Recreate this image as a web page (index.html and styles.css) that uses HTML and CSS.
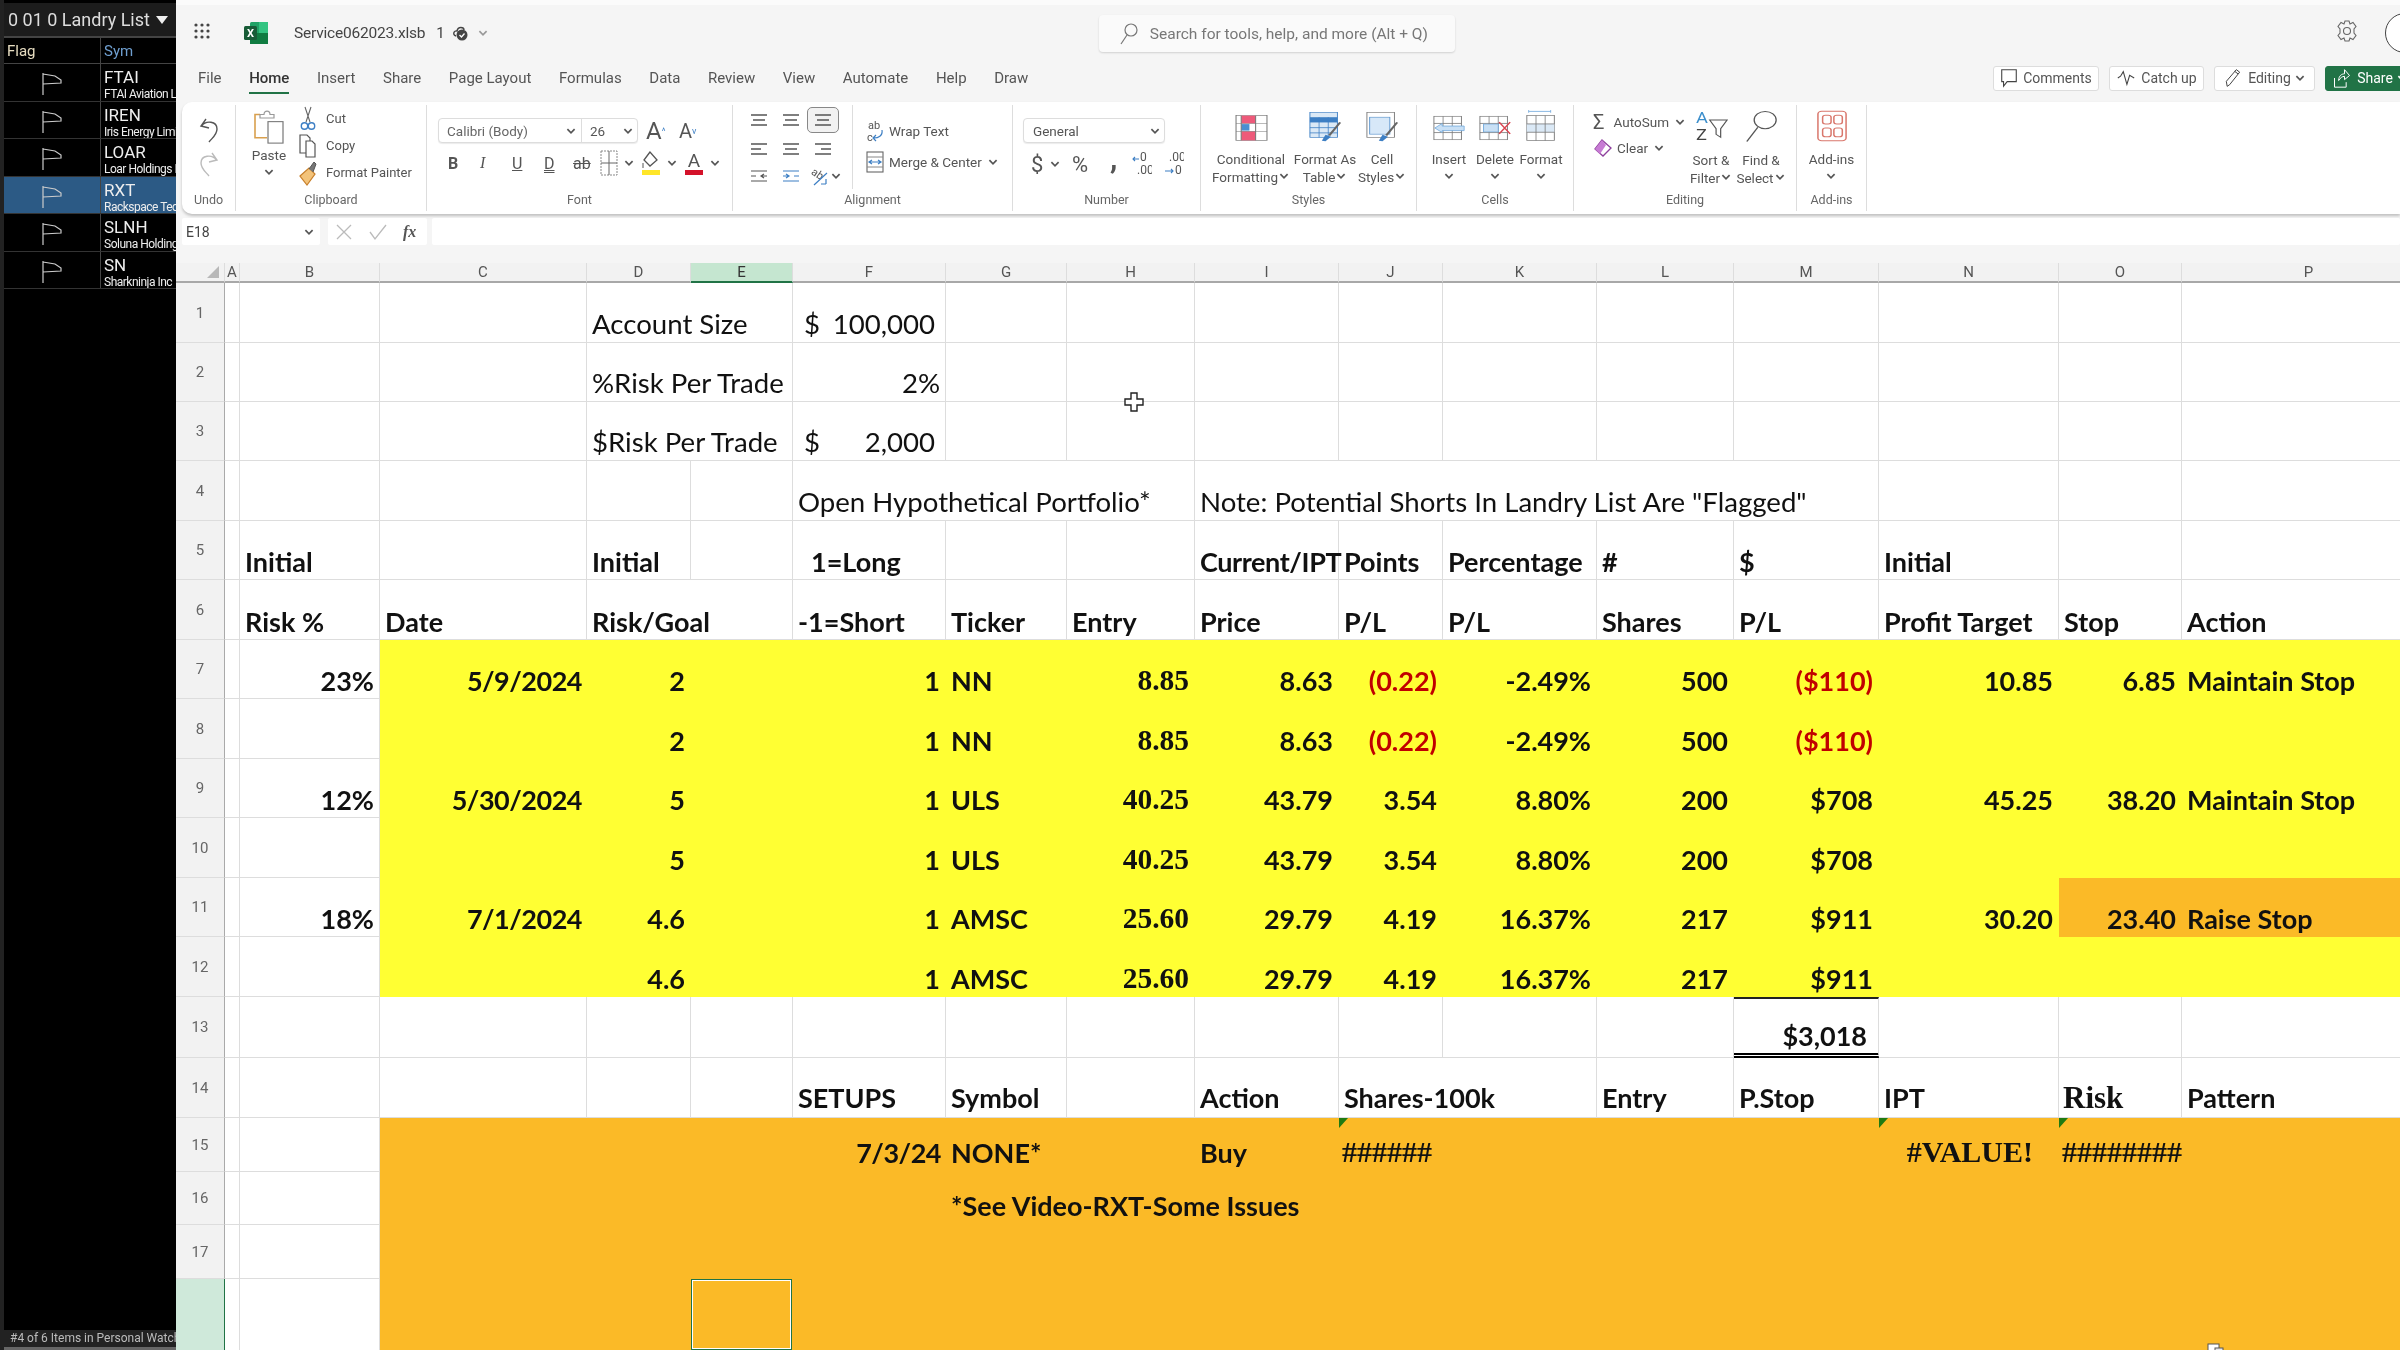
FILE: index.html
```html
<!DOCTYPE html>
<html lang="en">
<head>
    <meta charset="UTF-8">
    <title>Service062023.xlsb</title>
    <link rel="stylesheet" href="styles.css">
</head>
<body>
<svg class="defs" width="0" height="0">
    <symbol id="chev" viewBox="0 0 10 10"><path d="M2 3.5 L5 6.5 L8 3.5" fill="none" stroke="currentColor" stroke-width="1.4"/></symbol>
    <symbol id="flag" viewBox="0 0 20 24"><path d="M1 1 V23 M1 2 L13 4 L19 8 V11 L1 12" fill="none" stroke="currentColor" stroke-width="1.2"/></symbol>
    <symbol id="lines" viewBox="0 0 18 14"><path d="M1 2 H17 M3 7 H15 M1 12 H17" fill="none" stroke="#555" stroke-width="1.4"/></symbol>
    <symbol id="lines-left" viewBox="0 0 18 14"><path d="M1 2 H17 M1 7 H11 M1 12 H17" fill="none" stroke="#555" stroke-width="1.4"/></symbol>
    <symbol id="lines-right" viewBox="0 0 18 14"><path d="M1 2 H17 M7 7 H17 M1 12 H17" fill="none" stroke="#555" stroke-width="1.4"/></symbol>
</svg>

<div class="app">
    <aside class="side">
        <div class="side-title"><span>0 01 0 Landry List</span><span class="side-caret"></span><span class="side-bar"></span></div>
        <div class="side-head"><div class="side-flag">Flag</div><div class="side-sym">Sym</div></div>
        <div class="side-row"><div class="flag-cell"><svg class="flag-icon"><use href="#flag"/></svg></div><div class="sym-cell"><b>FTAI</b><small>FTAI Aviation Ltd</small></div></div>
        <div class="side-row"><div class="flag-cell"><svg class="flag-icon"><use href="#flag"/></svg></div><div class="sym-cell"><b>IREN</b><small>Iris Energy Limited</small></div></div>
        <div class="side-row"><div class="flag-cell"><svg class="flag-icon"><use href="#flag"/></svg></div><div class="sym-cell"><b>LOAR</b><small>Loar Holdings Inc</small></div></div>
        <div class="side-row current"><div class="flag-cell"><svg class="flag-icon"><use href="#flag"/></svg></div><div class="sym-cell"><b>RXT</b><small>Rackspace Technology</small></div></div>
        <div class="side-row"><div class="flag-cell"><svg class="flag-icon"><use href="#flag"/></svg></div><div class="sym-cell"><b>SLNH</b><small>Soluna Holdings</small></div></div>
        <div class="side-row"><div class="flag-cell"><svg class="flag-icon"><use href="#flag"/></svg></div><div class="sym-cell"><b>SN</b><small>Sharkninja Inc</small></div></div>
        <div class="side-foot">#4 of 6 Items in Personal Watchlist</div>
    </aside>

    <main class="main">
        <header class="topbar">
            <svg class="waffle" width="18" height="18" viewBox="0 0 18 18" fill="#444"><circle cx="3" cy="3" r="1.6"/><circle cx="9" cy="3" r="1.6"/><circle cx="15" cy="3" r="1.6"/><circle cx="3" cy="9" r="1.6"/><circle cx="9" cy="9" r="1.6"/><circle cx="15" cy="9" r="1.6"/><circle cx="3" cy="15" r="1.6"/><circle cx="9" cy="15" r="1.6"/><circle cx="15" cy="15" r="1.6"/></svg>
            <svg class="xl-logo" width="24" height="22" viewBox="0 0 24 22"><rect x="6" y="0" width="18" height="22" rx="1.5" fill="#21a366"/><rect x="15" y="0" width="9" height="11" fill="#33c481"/><rect x="6" y="11" width="18" height="11" fill="#107c41"/><rect x="0" y="4" width="13" height="14" rx="1.5" fill="#185c37"/><text x="6.5" y="15" font-size="11" font-weight="700" fill="#fff" text-anchor="middle" font-family="Roboto, sans-serif">X</text></svg>
            <span class="doc-name">Service062023.xlsb</span>
            <span class="doc-num">1</span>
            <svg class="doc-cloud" width="20" height="20" viewBox="0 0 20 20"><path d="M5 13 C1 12 3 7 6 8 C7 3 13 4 13 7" fill="none" stroke="#444" stroke-width="1.4"/><circle cx="11" cy="12" r="5.5" fill="#444"/><path d="M8.5 12 L10.5 14 L13.5 10.5" fill="none" stroke="#fff" stroke-width="1.3"/></svg>
            <svg class="ico-chev muted"><use href="#chev"/></svg>
            <div class="search">
                <svg width="20" height="24" viewBox="0 0 20 24"><circle cx="12" cy="8" r="6" fill="none" stroke="#777" stroke-width="1.2"/><path d="M8 13 L2 22" stroke="#777" stroke-width="1.2"/></svg>
                <span>Search for tools, help, and more (Alt + Q)</span>
            </div>
            <svg class="gear" width="22" height="24" viewBox="0 0 22 24"><path d="M9 2 H13 L14 5 L17 3.5 L20 7.5 L18 10 L18 14 L20 16.5 L17 20.5 L14 19 L13 22 H9 L8 19 L5 20.5 L2 16.5 L4 14 L4 10 L2 7.5 L5 3.5 L8 5 Z" fill="none" stroke="#666" stroke-width="1.1"/><circle cx="11" cy="12" r="3.5" fill="none" stroke="#666" stroke-width="1.1"/></svg>
            <div class="avatar">D</div>
        </header>

        <nav class="tabs">
            <a>File</a><a class="active">Home</a><a>Insert</a><a>Share</a><a>Page Layout</a><a>Formulas</a><a>Data</a><a>Review</a><a>View</a><a>Automate</a><a>Help</a><a>Draw</a>
            <div class="actions">
                <button class="act act-comments"><svg width="18" height="22" viewBox="0 0 18 22"><path d="M1 2 H17 V15 H7 L3 20 V15 H1 Z" fill="none" stroke="#444" stroke-width="1.2"/></svg>Comments</button>
                <button class="act act-catch"><svg width="20" height="22" viewBox="0 0 20 22"><path d="M1 11 L4 9 L7 4 L11 18 L14 8 L19 11" fill="none" stroke="#444" stroke-width="1.2"/></svg>Catch up</button>
                <button class="act act-edit"><svg width="20" height="24" viewBox="0 0 20 24"><path d="M3 22 L2 16 L14 2 L18 5 L6 20 Z M12 4 L16 7" fill="none" stroke="#444" stroke-width="1.2"/></svg>Editing<svg class="ico-chev"><use href="#chev"/></svg></button>
                <button class="act act-share"><svg width="20" height="24" viewBox="0 0 20 24"><path d="M1 12 V23 H15 V17 M6 15 C6 9 10 7 13 7 V2 L19 9 L13 14 V10 C10 10 8 12 6 15 Z" fill="none" stroke="#fff" stroke-width="1.2"/></svg>Share<svg class="ico-chev"><use href="#chev"/></svg></button>
            </div>
        </nav>

        <div class="ribbon">
            <section class="group g-undo">
                <div class="group-body undo-body">
                    <svg width="22" height="30" viewBox="0 0 22 30"><path d="M8 3 L3 10 L11 12 M3.5 10 C8 4 19 5 19 13 C19 19 14 22 11 26" fill="none" stroke="#555" stroke-width="1.4"/></svg>
                    <svg width="22" height="30" viewBox="0 0 22 30"><path d="M14 3 L19 10 L11 12 M18.5 10 C14 4 3 5 3 13 C3 19 8 22 11 26" fill="none" stroke="#bbb" stroke-width="1.4"/></svg>
                </div>
                <div class="group-label">Undo</div>
            </section>

            <section class="group g-clip">
                <div class="group-body clip-body">
                    <div class="paste">
                        <svg width="32" height="34" viewBox="0 0 32 38" preserveAspectRatio="none"><path d="M7 5 H2 V31 H14" fill="none" stroke="#d9a04e" stroke-width="1.6"/><path d="M7 5 H11 C11 0 17 0 17 5 H21 V9 H7 Z" fill="#fff" stroke="#999" stroke-width="1.2"/><rect x="15" y="13" width="15" height="24" fill="#fff" stroke="#777" stroke-width="1.2"/></svg>
                        <span>Paste</span>
                        <svg class="ico-chev"><use href="#chev"/></svg>
                    </div>
                    <div class="clip-list">
                        <div class="clip-item"><svg width="18" height="26" viewBox="0 0 18 26"><path d="M6 1 L11 16 M12 1 L7 16" stroke="#666" stroke-width="1.1"/><circle cx="5.5" cy="20" r="3.2" fill="none" stroke="#3d7fc4" stroke-width="1.4"/><circle cx="12.5" cy="20" r="3.2" fill="none" stroke="#3d7fc4" stroke-width="1.4"/></svg>Cut</div>
                        <div class="clip-item"><svg width="18" height="26" viewBox="0 0 18 26"><path d="M1 2 H8 L11 5 V20 H1 Z" fill="#fff" stroke="#555" stroke-width="1.2"/><path d="M7 8 H13 L16 11 V24 H7 Z" fill="#fff" stroke="#555" stroke-width="1.2"/></svg>Copy</div>
                        <div class="clip-item"><svg width="18" height="26" viewBox="0 0 18 26"><path d="M1 16 L10 8 L16 14 L8 25 Z" fill="#f3c37a" stroke="#c87f2a" stroke-width="1.2"/><path d="M10 9 L15 2 L17 4 L14 12" fill="#777" stroke="#555"/></svg>Format Painter</div>
                    </div>
                </div>
                <div class="group-label">Clipboard</div>
            </section>

            <section class="group g-font">
                <div class="group-body font-body">
                    <div class="tool-row">
                        <div class="select font-select">
                            <span class="select-name">Calibri (Body)<svg class="ico-chev"><use href="#chev"/></svg></span>
                            <span class="select-size">26<svg class="ico-chev"><use href="#chev"/></svg></span>
                        </div>
                        <span class="grow-a">A<sup>^</sup></span>
                        <span class="grow-a small-a">A<sup>v</sup></span>
                    </div>
                    <div class="tool-row font-tools">
                        <span class="ft bold">B</span>
                        <span class="ft ital">I</span>
                        <span class="ft under">U</span>
                        <span class="ft dunder">D</span>
                        <span class="ft strike">ab</span>
                        <svg class="ft-ico" width="18" height="26" viewBox="0 0 18 26"><rect x="1" y="1" width="16" height="24" fill="none" stroke="#888" stroke-dasharray="2 1"/><path d="M9 1 V25 M1 13 H17" stroke="#666"/></svg>
                        <svg class="ico-chev"><use href="#chev"/></svg>
                        <svg class="ft-ico" width="20" height="26" viewBox="0 0 20 26"><path d="M9 2 L3 10 L9 16 L16 10 Z" fill="none" stroke="#555" stroke-width="1.3"/><path d="M2 18 V13" stroke="#555"/><rect x="1" y="20" width="18" height="5" fill="#ffe629"/></svg>
                        <svg class="ico-chev"><use href="#chev"/></svg>
                        <svg class="ft-ico" width="20" height="26" viewBox="0 0 20 26"><text x="10" y="17" font-size="19" text-anchor="middle" fill="#555" font-family="Roboto, sans-serif">A</text><rect x="1" y="20" width="18" height="5" fill="#d4122a"/></svg>
                        <svg class="ico-chev"><use href="#chev"/></svg>
                    </div>
                </div>
                <div class="group-label">Font</div>
            </section>

            <section class="group g-align">
                <div class="group-body align-body">
                    <div class="align-grid">
                        <svg width="18" height="14"><use href="#lines"/></svg>
                        <svg width="18" height="14"><use href="#lines"/></svg>
                        <span class="align-on"><svg width="18" height="14"><use href="#lines"/></svg></span>
                        <svg width="18" height="14"><use href="#lines-left"/></svg>
                        <svg width="18" height="14"><use href="#lines"/></svg>
                        <svg width="18" height="14"><use href="#lines-right"/></svg>
                        <svg width="18" height="14" viewBox="0 0 18 14"><path d="M1 2 H17 M1 12 H17 M1 7 H6 M14 5 L11 7 L14 9 M11 7 H17" fill="none" stroke="#555" stroke-width="1.2"/></svg>
                        <svg width="18" height="14" viewBox="0 0 18 14"><path d="M1 2 H17 M1 12 H17 M12 7 H17 M1 7 H7 M4 5 L7 7 L4 9" fill="none" stroke="#3d7fc4" stroke-width="1.2"/></svg>
                        <span class="orient"><svg width="20" height="22" viewBox="0 0 20 22"><text x="1" y="13" font-size="11" fill="#555" transform="rotate(35 8 10)" font-family="Roboto, sans-serif">ab</text><path d="M4 20 L17 8 M16 19 H11 M16 19 V14" fill="none" stroke="#3d7fc4" stroke-width="1.2"/></svg><svg class="ico-chev"><use href="#chev"/></svg></span>
                    </div>
                    <div class="wrap-col">
                        <div class="wrap-item"><svg width="18" height="24" viewBox="0 0 18 24"><text x="2" y="10" font-size="11" fill="#555" font-family="Roboto, sans-serif">ab</text><text x="1" y="22" font-size="11" fill="#555" font-family="Roboto, sans-serif">c</text><path d="M16 11 C17 17 12 19 8 19 M10 16 L7 19 L10 22" fill="none" stroke="#3d7fc4" stroke-width="1.2"/></svg>Wrap Text</div>
                        <div class="wrap-item"><svg width="18" height="24" viewBox="0 0 18 24"><rect x="1" y="2" width="16" height="20" fill="none" stroke="#666" stroke-width="1.1"/><path d="M1 7 H17 M1 17 H17" stroke="#888"/><path d="M3 12 H15 M6 10 L3 12 L6 14 M12 10 L15 12 L12 14" fill="none" stroke="#3d7fc4" stroke-width="1.2"/></svg>Merge &amp; Center<svg class="ico-chev"><use href="#chev"/></svg></div>
                    </div>
                </div>
                <div class="group-label">Alignment</div>
            </section>

            <section class="group g-number">
                <div class="group-body number-body">
                    <div class="select number-select"><span>General</span><svg class="ico-chev"><use href="#chev"/></svg></div>
                    <div class="tool-row number-tools">
                        <span class="nt nt-dollar">$</span>
                        <svg class="ico-chev"><use href="#chev"/></svg>
                        <span class="nt nt-pct">%</span>
                        <span class="nt nt-comma">,</span>
                        <svg width="20" height="26" viewBox="0 0 20 26"><text x="8" y="10" font-size="12" fill="#555" font-family="Roboto, sans-serif">0</text><text x="5" y="23" font-size="12" fill="#555" font-family="Roboto, sans-serif">.00</text><path d="M1 8 H7 M3 6 L1 8 L3 10" fill="none" stroke="#3d7fc4" stroke-width="1.1"/></svg>
                        <svg width="20" height="26" viewBox="0 0 20 26"><text x="5" y="10" font-size="12" fill="#555" font-family="Roboto, sans-serif">.00</text><text x="11" y="23" font-size="12" fill="#555" font-family="Roboto, sans-serif">0</text><path d="M1 20 H9 M7 18 L9 20 L7 22" fill="none" stroke="#3d7fc4" stroke-width="1.1"/></svg>
                    </div>
                </div>
                <div class="group-label">Number</div>
            </section>

            <section class="group g-styles">
                <div class="group-body big-body styles-body">
                    <div class="big big-cond">
                        <svg viewBox="0 0 32 40" preserveAspectRatio="none"><rect x="1" y="1" width="30" height="38" fill="#fff" stroke="#777"/><rect x="6" y="1" width="14" height="12" fill="#ee5a7a"/><rect x="6" y="14" width="8" height="10" fill="#4a8fd0"/><rect x="6" y="25" width="14" height="14" fill="#ee5a7a"/><path d="M1 13 H31 M1 25 H31 M6 1 V39 M20 1 V39" stroke="#777"/></svg>
                        <span>Conditional<br>Formatting<svg class="ico-chev"><use href="#chev"/></svg></span>
                    </div>
                    <div class="big big-table">
                        <svg viewBox="0 0 36 46" preserveAspectRatio="none"><rect x="1" y="1" width="30" height="38" fill="#dbe9f6" stroke="#3d7fc4"/><rect x="1" y="8" width="30" height="8" fill="#3d7fc4"/><path d="M1 24 H31 M1 32 H31 M11 8 V39 M21 8 V39" stroke="#3d7fc4"/><path d="M34 16 L22 36" stroke="#666" stroke-width="2.5"/><path d="M18 35 L24 38 L18 45 L14 44 Z" fill="#3d7fc4"/></svg>
                        <span>Format As<br>Table<svg class="ico-chev"><use href="#chev"/></svg></span>
                    </div>
                    <div class="big big-cell">
                        <svg viewBox="0 0 36 46" preserveAspectRatio="none"><rect x="1" y="1" width="30" height="38" fill="#fff" stroke="#777"/><rect x="4" y="8" width="22" height="26" fill="#d7e8f8" stroke="#5a93cc"/><path d="M34 16 L22 36" stroke="#666" stroke-width="2.5"/><path d="M18 35 L24 38 L18 45 L14 44 Z" fill="#3d7fc4"/></svg>
                        <span>Cell<br>Styles<svg class="ico-chev"><use href="#chev"/></svg></span>
                    </div>
                </div>
                <div class="group-label">Styles</div>
            </section>

            <section class="group g-cells">
                <div class="group-body big-body cells-body">
                    <div class="big big-cellbtn">
                        <svg viewBox="0 0 36 40" preserveAspectRatio="none"><rect x="1" y="2" width="30" height="36" fill="#fff" stroke="#777"/><path d="M1 13 H31 M1 27 H31 M11 2 V38 M21 2 V38" stroke="#777"/><path d="M2 20 L10 13 V17 H34 V24 H10 V27 Z" fill="#c9e0f5" stroke="#6fa8dc"/></svg>
                        <span>Insert<br><svg class="ico-chev"><use href="#chev"/></svg></span>
                    </div>
                    <div class="big big-cellbtn">
                        <svg viewBox="0 0 36 40" preserveAspectRatio="none"><rect x="1" y="2" width="30" height="36" fill="#fff" stroke="#777"/><path d="M1 13 H31 M1 27 H31 M11 2 V38 M21 2 V38" stroke="#777"/><rect x="5" y="14" width="16" height="12" fill="#c9e0f5" stroke="#6fa8dc"/><path d="M22 11 L34 29 M34 11 L22 29" stroke="#d9434f" stroke-width="1.6"/></svg>
                        <span>Delete<br><svg class="ico-chev"><use href="#chev"/></svg></span>
                    </div>
                    <div class="big big-format">
                        <svg viewBox="0 0 36 46" preserveAspectRatio="none"><path d="M4 2 H28 M4 0 V4 M28 0 V4" stroke="#6fa8dc"/><rect x="2" y="8" width="30" height="36" fill="#fff" stroke="#777"/><rect x="2" y="20" width="30" height="12" fill="#dbe9f6"/><path d="M2 20 H32 M2 32 H32 M12 8 V44 M22 8 V44" stroke="#777"/></svg>
                        <span>Format<br><svg class="ico-chev"><use href="#chev"/></svg></span>
                    </div>
                </div>
                <div class="group-label">Cells</div>
            </section>

            <section class="group g-edit">
                <div class="group-body edit-body">
                    <div class="edit-list">
                        <div class="edit-item"><span class="sigma">Σ</span>AutoSum<svg class="ico-chev"><use href="#chev"/></svg></div>
                        <div class="edit-item"><svg width="19" height="20" viewBox="0 0 19 20"><path d="M9 2 L18 10 L10 18 L2 11 Z" fill="none" stroke="#8d3f9c" stroke-width="1.3"/><path d="M9 2 L2 11 L7 16 L13 7 Z" fill="#c77bd4"/></svg>Clear<svg class="ico-chev"><use href="#chev"/></svg></div>
                    </div>
                    <div class="big big-sort">
                        <svg viewBox="0 0 36 46" preserveAspectRatio="none"><text x="1" y="18" font-size="20" fill="#3d8fcc" font-family="Roboto, sans-serif">A</text><text x="1" y="42" font-size="20" fill="#444" font-family="Roboto, sans-serif">Z</text><path d="M16 14 H35 L28 26 V38 L23 34 V26 Z" fill="none" stroke="#555" stroke-width="1.3"/></svg>
                        <span>Sort &amp;<br>Filter<svg class="ico-chev"><use href="#chev"/></svg></span>
                    </div>
                    <div class="big big-find">
                        <svg viewBox="0 0 36 46" preserveAspectRatio="none"><circle cx="22" cy="14" r="12" fill="none" stroke="#555" stroke-width="1.4"/><path d="M14 24 L2 44" stroke="#555" stroke-width="1.6"/></svg>
                        <span>Find &amp;<br>Select<svg class="ico-chev"><use href="#chev"/></svg></span>
                    </div>
                </div>
                <div class="group-label">Editing</div>
            </section>

            <section class="group g-addins">
                <div class="group-body big-body addin-body">
                    <div class="big big-addin">
                        <svg viewBox="0 0 32 48" preserveAspectRatio="none"><rect x="1" y="2" width="30" height="44" rx="4" fill="#fff" stroke="#d9776c" stroke-width="1.6"/><rect x="6" y="8" width="9" height="13" rx="3" fill="none" stroke="#d9776c" stroke-width="1.6"/><rect x="18" y="8" width="9" height="13" rx="3" fill="none" stroke="#d9776c" stroke-width="1.6"/><rect x="6" y="27" width="9" height="13" rx="3" fill="none" stroke="#d9776c" stroke-width="1.6"/><rect x="18" y="27" width="9" height="13" rx="3" fill="none" stroke="#d9776c" stroke-width="1.6"/></svg>
                        <span>Add-ins<br><svg class="ico-chev"><use href="#chev"/></svg></span>
                    </div>
                </div>
                <div class="group-label">Add-ins</div>
            </section>
        </div>

        <div class="formula">
            <div class="name-box"><span>E18</span><svg class="ico-chev"><use href="#chev"/></svg></div>
            <div class="fx-box">
                <svg width="18" height="18" viewBox="0 0 18 18"><path d="M2 2 L16 16 M16 2 L2 16" stroke="#bbb" stroke-width="1.3"/></svg>
                <svg width="20" height="18" viewBox="0 0 20 18"><path d="M2 9 L7 16 L18 2" fill="none" stroke="#bbb" stroke-width="1.3"/></svg>
                <i>fx</i>
            </div>
            <div class="formula-input"></div>
        </div>

        <div class="sheet">
            <table class="grid">
                <colgroup>
                    <col class="c-hdr"><col class="c-a"><col class="c-b"><col class="c-c"><col class="c-d"><col class="c-e"><col class="c-f"><col class="c-g"><col class="c-h"><col class="c-i"><col class="c-j"><col class="c-k"><col class="c-l"><col class="c-m"><col class="c-n"><col class="c-o"><col class="c-p">
                </colgroup>
                <thead>
                    <tr class="letters">
                        <th class="corner"><svg width="14" height="14" viewBox="0 0 14 14"><path d="M13 1 V13 H1 Z" fill="#b8b8b8"/></svg></th>
                        <th>A</th><th>B</th><th>C</th><th>D</th><th class="picked">E</th><th>F</th><th>G</th><th>H</th><th>I</th><th>J</th><th>K</th><th>L</th><th>M</th><th>N</th><th>O</th><th>P</th>
                    </tr>
                </thead>
                <tbody>
                    <tr class="h60 plain"><th>1</th><td></td><td></td><td></td><td colspan="2">Account Size</td><td><div class="acct"><span>$</span><span>100,000</span></div></td><td></td><td></td><td></td><td></td><td></td><td></td><td></td><td></td><td></td><td></td></tr>
                    <tr class="h59 plain"><th>2</th><td></td><td></td><td></td><td colspan="2">%Risk Per Trade</td><td class="r">2%</td><td></td><td></td><td></td><td></td><td></td><td></td><td></td><td></td><td></td><td></td></tr>
                    <tr class="h59 plain"><th>3</th><td></td><td></td><td></td><td colspan="2">$Risk Per Trade</td><td><div class="acct"><span>$</span><span>2,000</span></div></td><td></td><td></td><td></td><td></td><td></td><td></td><td></td><td></td><td></td><td></td></tr>
                    <tr class="h60 plain"><th>4</th><td></td><td></td><td></td><td></td><td></td><td colspan="3">Open Hypothetical Portfolio*</td><td colspan="5">Note: Potential Shorts In Landry List Are "Flagged"</td><td></td><td></td><td></td></tr>
                    <tr class="h59"><th>5</th><td></td><td>Initial</td><td></td><td>Initial</td><td></td><td class="ind">1=Long</td><td></td><td></td><td class="tight">Current/IPT</td><td>Points</td><td>Percentage</td><td>#</td><td>$</td><td>Initial</td><td></td><td></td></tr>
                    <tr class="h60"><th>6</th><td></td><td>Risk %</td><td>Date</td><td colspan="2">Risk/Goal</td><td>-1=Short</td><td>Ticker</td><td>Entry</td><td>Price</td><td>P/L</td><td>P/L</td><td>Shares</td><td>P/L</td><td>Profit Target</td><td>Stop</td><td>Action</td></tr>
                    <tr class="h59 yel"><th>7</th><td></td><td class="r white">23%</td><td class="r date">5/9/2024</td><td class="r">2</td><td></td><td class="r">1</td><td>NN</td><td class="r s">8.85</td><td class="r">8.63</td><td class="r neg">(0.22)</td><td class="r">-2.49%</td><td class="r">500</td><td class="r neg">($110)</td><td class="r">10.85</td><td class="r">6.85</td><td>Maintain Stop</td></tr>
                    <tr class="h60 yel"><th>8</th><td></td><td class="white"></td><td></td><td class="r">2</td><td></td><td class="r">1</td><td>NN</td><td class="r s">8.85</td><td class="r">8.63</td><td class="r neg">(0.22)</td><td class="r">-2.49%</td><td class="r">500</td><td class="r neg">($110)</td><td></td><td></td><td></td></tr>
                    <tr class="h59 yel"><th>9</th><td></td><td class="r white">12%</td><td class="r date">5/30/2024</td><td class="r">5</td><td></td><td class="r">1</td><td>ULS</td><td class="r s">40.25</td><td class="r">43.79</td><td class="r">3.54</td><td class="r">8.80%</td><td class="r">200</td><td class="r">$708</td><td class="r">45.25</td><td class="r">38.20</td><td>Maintain Stop</td></tr>
                    <tr class="h60 yel"><th>10</th><td></td><td class="white"></td><td></td><td class="r">5</td><td></td><td class="r">1</td><td>ULS</td><td class="r s">40.25</td><td class="r">43.79</td><td class="r">3.54</td><td class="r">8.80%</td><td class="r">200</td><td class="r">$708</td><td></td><td></td><td></td></tr>
                    <tr class="h59 yel"><th>11</th><td></td><td class="r white">18%</td><td class="r date">7/1/2024</td><td class="r">4.6</td><td></td><td class="r">1</td><td>AMSC</td><td class="r s">25.60</td><td class="r">29.79</td><td class="r">4.19</td><td class="r">16.37%</td><td class="r">217</td><td class="r">$911</td><td class="r">30.20</td><td class="r flagged">23.40</td><td class="flagged">Raise Stop</td></tr>
                    <tr class="h60 yel"><th>12</th><td></td><td class="white"></td><td></td><td class="r">4.6</td><td></td><td class="r">1</td><td>AMSC</td><td class="r s">25.60</td><td class="r">29.79</td><td class="r">4.19</td><td class="r">16.37%</td><td class="r">217</td><td class="r">$911</td><td></td><td></td><td></td></tr>
                    <tr class="h61"><th>13</th><td></td><td></td><td></td><td></td><td></td><td></td><td></td><td></td><td></td><td></td><td></td><td></td><td class="r total">$3,018</td><td></td><td></td><td></td></tr>
                    <tr class="h60 setups"><th>14</th><td></td><td></td><td></td><td></td><td></td><td>SETUPS</td><td>Symbol</td><td></td><td>Action</td><td colspan="2">Shares-100k</td><td>Entry</td><td>P.Stop</td><td>IPT</td><td class="s big-risk">Risk</td><td>Pattern</td></tr>
                    <tr class="h54 org"><th>15</th><td></td><td></td><td></td><td></td><td></td><td class="r date">7/3/24</td><td>NONE*</td><td></td><td>Buy</td><td class="s note">######</td><td></td><td></td><td></td><td class="r s note err">#VALUE!</td><td class="s note">########</td><td></td></tr>
                    <tr class="h53 org"><th>16</th><td></td><td></td><td></td><td></td><td></td><td></td><td colspan="4">*See Video-RXT-Some Issues</td><td></td><td></td><td></td><td></td><td></td><td></td></tr>
                    <tr class="h54 org"><th>17</th><td></td><td></td><td></td><td></td><td></td><td></td><td></td><td></td><td></td><td></td><td></td><td></td><td></td><td></td><td></td><td></td></tr>
                    <tr class="h72 org"><th class="picked"></th><td></td><td></td><td></td><td></td><td class="active-cell"></td><td></td><td></td><td></td><td></td><td></td><td></td><td></td><td></td><td></td><td></td><td></td></tr>
                </tbody>
            </table>
            <svg class="cursor" width="22" height="22" viewBox="0 0 22 22"><path d="M8 2 H14 V8 H20 V14 H14 V20 H8 V14 H2 V8 H8 Z" fill="#fff" stroke="#222" stroke-width="1.4"/></svg>
            <svg class="drop-tag" width="18" height="18" viewBox="0 0 18 18"><rect x="1" y="1" width="11" height="14" fill="#fff" stroke="#555"/><rect x="8" y="5" width="8" height="12" fill="#e8e8e8" stroke="#555"/></svg>
        </div>
    </main>
</div>
</body>
</html>
```

FILE: styles.css
```css
* {
    margin: 0;
    padding: 0;
    box-sizing: border-box;
}
html, body {
    width: 2400px;
    height: 1350px;
    overflow: hidden;
    background: #000;
}
body {
    font-family: Roboto, "Noto Sans", sans-serif;
    color: #444;
}
.defs {
    position: absolute;
}
.app {
    display: flex;
    height: 1350px;
    /* the reference is a video frame, everything is a little soft */
    filter: blur(0.35px);
}
.ico-chev {
    width: 12px;
    height: 12px;
    flex: none;
    color: #555;
}
.ico-chev.muted {
    color: #999;
}

/* black watch list on the left */
.side {
    width: 176px;
    flex: none;
    height: 1350px;
    background: #000;
    border-left: 4px solid #222;
    display: flex;
    flex-direction: column;
    color: #ddd;
    overflow: hidden;
}
.side-title {
    height: 33px;
    margin-top: 3px;
    padding-left: 4px;
    background: #1c1c1c;
    display: flex;
    align-items: center;
    gap: 6px;
    font-size: 18px;
    white-space: nowrap;
}
.side-caret {
    width: 0;
    height: 0;
    border-left: 6px solid transparent;
    border-right: 6px solid transparent;
    border-top: 8px solid #eee;
}
.side-bar {
    width: 2px;
    height: 18px;
    margin-left: 10px;
    background: #777;
}
.side-head {
    height: 28px;
    display: grid;
    grid-template-columns: 97px 1fr;
    border-top: 2px solid #444;
    border-bottom: 1px solid #444;
    font-size: 15px;
    line-height: 27px;
}
.side-flag {
    padding-left: 3px;
    color: #e6dcc0;
    border-right: 1px solid #444;
}
.side-sym {
    padding-left: 3px;
    color: #6f9fd0;
}
.side-row {
    height: 37.5px;
    display: grid;
    grid-template-columns: 97px 1fr;
    border-bottom: 1px solid #333;
}
.side-row.current {
    background: #2c5a85;
}
.flag-cell {
    display: flex;
    align-items: center;
    justify-content: center;
    padding-top: 4px;
    border-right: 1px solid #444;
    color: #ccc;
}
.flag-icon {
    width: 20px;
    height: 24px;
}
.sym-cell {
    padding-left: 3px;
    padding-top: 3px;
    overflow: hidden;
    white-space: nowrap;
}
.sym-cell b {
    display: block;
    font-weight: 400;
    font-size: 17px;
    line-height: 20px;
    color: #eee;
}
.sym-cell small {
    display: block;
    font-size: 12px;
    line-height: 14px;
    letter-spacing: -0.5px;
    color: #eee;
}
.side-foot {
    margin-top: auto;
    height: 20px;
    padding-left: 6px;
    background: #222;
    border-bottom: 3px solid #666;
    color: #bbb;
    font-size: 12px;
    line-height: 17px;
    white-space: nowrap;
}

/* excel window */
.main {
    flex: 1;
    min-width: 0;
    height: 1350px;
    background: #f5f5f5;
    display: flex;
    flex-direction: column;
    overflow: hidden;
}
.topbar {
    height: 60px;
    flex: none;
    border-top: 5px solid #fbfbfb;
    display: flex;
    align-items: center;
    padding-left: 17px;
}
.waffle {
    margin-bottom: 4px;
}
.xl-logo {
    margin-left: 33px;
}
.doc-name {
    margin-left: 26px;
    font-size: 15.5px;
    letter-spacing: -0.2px;
}
.doc-num {
    margin-left: 11px;
    font-size: 15px;
}
.doc-cloud {
    margin-left: 6px;
}
.topbar .ico-chev {
    margin-left: 6px;
}
.search {
    width: 356px;
    height: 37px;
    margin-left: 610px;
    margin-top: 2px;
    padding-left: 20px;
    background: #fafafa;
    border-radius: 4px;
    box-shadow: 0 1px 2px rgba(0, 0, 0, 0.15);
    display: flex;
    align-items: center;
    gap: 11px;
    font-size: 15.5px;
    color: #777;
    white-space: nowrap;
}
.gear {
    margin-left: auto;
    margin-bottom: 4px;
}
.avatar {
    width: 40px;
    height: 40px;
    margin-left: 27px;
    margin-right: -25px;
    flex: none;
    border: 1px solid #444;
    border-radius: 50%;
    background: #fff;
    font-size: 16px;
    line-height: 38px;
    text-align: center;
}

.tabs {
    height: 42px;
    flex: none;
    display: flex;
    align-items: center;
    gap: 27.6px;
    padding-left: 22px;
    padding-bottom: 6px;
    font-size: 15px;
    color: #555;
}
.tabs a {
    position: relative;
}
.tabs a.active {
    color: #333;
    font-weight: 500;
}
.tabs a.active::after {
    content: "";
    position: absolute;
    left: 0;
    right: 0;
    bottom: -7px;
    height: 2px;
    background: #217346;
}
.actions {
    margin-left: auto;
    margin-right: -15px;
    display: flex;
    gap: 10px;
}
.act {
    height: 25px;
    display: flex;
    align-items: center;
    justify-content: center;
    gap: 5px;
    background: #fff;
    border: 1px solid #ddd;
    border-radius: 3px;
    font: 14px Roboto, sans-serif;
    color: #555;
}
.act svg {
    height: 20px;
}
.act .ico-chev {
    height: 12px;
    margin-left: -2px;
}
.act-comments {
    width: 106px;
}
.act-catch {
    width: 95px;
}
.act-edit {
    width: 101px;
}
.act-share {
    width: 90px;
    background: #217346;
    border-color: #217346;
    color: #fff;
}
.act-share .ico-chev {
    color: #fff;
}

/* ribbon */
.ribbon {
    height: 112px;
    flex: none;
    margin-left: 6px;
    background: #fff;
    border-radius: 10px 0 0 10px;
    box-shadow: 0 2px 3px rgba(0, 0, 0, 0.22);
    display: flex;
}
.group {
    flex: none;
    height: 106px;
    margin-top: 3px;
    border-right: 1px solid #ddd;
    display: flex;
    flex-direction: column;
}
.g-undo { width: 54px; }
.g-clip { width: 191px; }
.g-font { width: 306px; }
.g-align { width: 280px; }
.g-number { width: 188px; }
.g-styles { width: 216px; }
.g-cells { width: 157px; }
.g-edit { width: 223px; }
.g-addins { width: 70px; }
.group-body {
    height: 87px;
    flex: none;
    font-size: 13.5px;
    color: #555;
    white-space: nowrap;
}
.group-label {
    text-align: center;
    font-size: 12.5px;
    line-height: 16px;
    color: #666;
}
.undo-body {
    display: flex;
    flex-direction: column;
    align-items: center;
    gap: 4px;
    padding-top: 11px;
}
.clip-body {
    display: flex;
    padding: 0 0 0 13px;
}
.paste {
    width: 40px;
    padding-top: 5px;
    display: flex;
    flex-direction: column;
    align-items: center;
}
.paste span {
    margin-top: 3px;
}
.paste .ico-chev {
    margin-top: 3px;
}
.clip-list {
    margin-left: 10px;
    display: flex;
    flex-direction: column;
}
.clip-item {
    height: 27px;
    display: flex;
    align-items: center;
    gap: 9px;
    font-size: 13px;
}
.tool-row {
    display: flex;
    align-items: center;
}
.font-body {
    padding: 13px 0 0 11px;
}
.select {
    height: 25px;
    background: #fff;
    border: 1px solid #ddd;
    border-radius: 4px;
    box-shadow: 0 1px 1px rgba(0, 0, 0, 0.08);
    display: flex;
    align-items: center;
}
.font-select {
    width: 200px;
}
.select-name {
    width: 143px;
    height: 100%;
    padding: 0 4px 0 8px;
    border-right: 1px solid #ddd;
    display: flex;
    align-items: center;
    justify-content: space-between;
    color: #666;
    font-size: 13.5px;
}
.select-size {
    flex: 1;
    padding: 0 3px 0 8px;
    display: flex;
    align-items: center;
    justify-content: space-between;
    font-size: 13.5px;
}
.grow-a {
    margin-left: 8px;
    width: 24px;
    font-size: 24px;
    line-height: 24px;
    color: #555;
}
.grow-a sup {
    font-size: 9px;
    color: #3d7fc4;
    vertical-align: top;
}
.small-a {
    margin-left: 9px;
    font-size: 20px;
}
.font-tools {
    margin-top: 5px;
    height: 30px;
    padding-left: 10px;
}
.ft {
    width: 32px;
    font-size: 16px;
    color: #555;
    text-decoration-thickness: 1px;
}
.bold {
    font-weight: 700;
}
.ital {
    font-style: italic;
    font-family: "Liberation Serif", serif;
}
.under {
    text-decoration: underline;
}
.dunder {
    width: 29px;
    text-decoration: underline double;
}
.strike {
    width: 27px;
    text-decoration: line-through;
}
.font-tools .ft-ico {
    margin-left: 0;
}
.font-tools .ico-chev {
    margin: 0 6px 0 5px;
}
.align-body {
    display: flex;
    padding-left: 10px;
}
.align-grid {
    width: 110px;
    height: 84px;
    display: grid;
    grid-template-columns: repeat(3, 32px);
    grid-template-rows: 29px 29px 26px;
    place-items: center;
    border-right: 1px solid #ddd;
    justify-content: start;
}
.align-on {
    width: 32px;
    height: 26px;
    border: 1px solid #888;
    border-radius: 5px;
    background: #f2f2f2;
    display: flex;
    align-items: center;
    justify-content: center;
}
.orient {
    display: flex;
    align-items: center;
    margin-left: 6px;
}
.wrap-col {
    margin-left: 13px;
    padding-top: 14px;
    display: flex;
    flex-direction: column;
    gap: 7px;
}
.wrap-item {
    height: 24px;
    display: flex;
    align-items: center;
    gap: 5px;
}
.number-body {
    padding: 13px 0 0 10px;
}
.number-select {
    width: 142px;
    justify-content: space-between;
    padding: 0 3px 0 9px;
    font-size: 13.5px;
}
.number-tools {
    margin-top: 6px;
    height: 30px;
    padding-left: 8px;
}
.nt {
    color: #555;
}
.nt-dollar {
    font-size: 22px;
    width: 18px;
}
.nt-pct {
    margin-left: 11px;
    width: 32px;
    font-size: 22px;
}
.nt-comma {
    width: 22px;
    margin-left: 6px;
    font-size: 30px;
    font-weight: 700;
    line-height: 18px;
    height: 28px;
}
.number-tools > svg:not(.ico-chev) {
    margin-right: 12px;
}
.big-body {
    display: flex;
}
.big {
    display: flex;
    flex-direction: column;
    align-items: center;
    text-align: center;
    line-height: 18px;
}
.big svg:first-child {
    width: 33px;
    height: 32px;
    flex: none;
}
.big span {
    margin-top: 8px;
}
.styles-body {
    padding: 5px 0 0 7px;
}
.big-cond { width: 86px; }
.big-table { width: 62px; }
.big-cell { width: 52px; }
.big-cond svg:first-child {
    height: 26px;
    margin-top: 5px;
    margin-bottom: 1px;
}
.big-table svg:first-child, .big-cell svg:first-child {
    height: 30px;
    margin-top: 2px;
}
.cells-body {
    padding: 5px 0 0 9px;
}
.big-cellbtn { width: 46px; }
.big-format { width: 46px; }
.big-cellbtn svg:first-child {
    height: 26px;
    margin-top: 5px;
    margin-bottom: 1px;
}
.edit-body {
    display: flex;
    padding: 3px 0 0 19px;
}
.edit-list {
    width: 93px;
    padding-top: 4px;
    display: flex;
    flex-direction: column;
    gap: 6px;
}
.edit-item {
    height: 20px;
    display: flex;
    align-items: center;
    gap: 5px;
}
.sigma {
    font-size: 20px;
    width: 19px;
}
.big-sort { width: 50px; }
.big-find { width: 50px; }
.big-sort svg:first-child, .big-find svg:first-child {
    height: 33px;
    margin-top: 2px;
    margin-bottom: 0;
}
.addin-body {
    padding-top: 5px;
}
.big-addin { width: 70px; }
.big-addin svg:first-child {
    width: 30px;
}

/* formula bar */
.formula {
    height: 27px;
    flex: none;
    margin-top: 4px;
    padding-left: 6px;
    display: flex;
    gap: 8px;
}
.name-box, .fx-box, .formula-input {
    height: 27px;
    background: #fff;
    border-radius: 2px;
}
.name-box {
    width: 138px;
    padding: 0 5px 0 4px;
    display: flex;
    align-items: center;
    justify-content: space-between;
    font-size: 14px;
}
.fx-box {
    width: 99px;
    display: flex;
    align-items: center;
    gap: 15px;
    padding-left: 7px;
}
.fx-box i {
    font-family: "Liberation Serif", serif;
    font-size: 16px;
    font-weight: 700;
    color: #555;
}
.formula-input {
    flex: 1;
    margin-left: -3px;
}

/* the sheet */
.sheet {
    position: relative;
    flex: none;
    margin-top: 18px;
    background: #fff;
}
.grid {
    width: 2260px;
    table-layout: fixed;
    border-collapse: separate;
    border-spacing: 0;
    font-family: Lato, "Liberation Sans", sans-serif;
    font-size: 27px;
    font-weight: 700;
    color: #111;
    background: #fff;
}
.c-hdr { width: 49px; }
.c-a { width: 15px; }
.c-b { width: 140px; }
.c-c { width: 207px; }
.c-d { width: 104px; }
.c-e { width: 102px; }
.c-f { width: 153px; }
.c-g { width: 121px; }
.c-h { width: 128px; }
.c-i { width: 144px; }
.c-j { width: 104px; }
.c-k { width: 154px; }
.c-l { width: 137px; }
.c-m { width: 145px; }
.c-n { width: 180px; }
.c-o { width: 123px; }
.c-p { width: 254px; }
.letters th {
    height: 20px;
    background: #f2f2f2;
    border-right: 1px solid #ddd;
    border-bottom: 2px solid #a8a8a8;
    font: 400 15px Roboto, sans-serif;
    line-height: 16px;
    color: #555;
}
.letters .corner {
    text-align: right;
    padding-right: 4px;
    line-height: 0;
}
.letters th.picked {
    background: #c5e6d0;
    border-bottom-color: #217346;
    color: #333;
}
tbody th {
    background: #f2f2f2;
    border-right: 1px solid #aaa;
    border-bottom: 1px solid #ddd;
    font: 400 15px Roboto, sans-serif;
    color: #666;
}
tbody th.picked {
    background: #cfe9da;
    border-right-color: #217346;
}
.h53 { height: 53px; }
.h54 { height: 54px; }
.h59 { height: 59px; }
.h60 { height: 60px; }
.h61 { height: 61px; }
.h72 { height: 72px; }
td {
    position: relative;
    vertical-align: bottom;
    padding: 0 5px 1px;
    border-right: 1px solid #ddd;
    border-bottom: 1px solid #ddd;
    white-space: nowrap;
}
.plain td {
    padding-bottom: 2px;
    font-size: 27.6px;
    font-weight: 400;
}
.setups td {
    padding-bottom: 3px;
}
.org td {
    padding-bottom: 2px;
}
.r {
    text-align: right;
}
.ind {
    padding-left: 18px;
}
.tight {
    letter-spacing: -0.4px;
}
td.date {
    letter-spacing: -0.5px;
    padding-right: 4px;
}
td.s {
    font-family: "Liberation Serif", serif;
    font-size: 29.5px;
}
td.note {
    font-size: 30px;
    padding-left: 3px;
}
td.err {
    padding-right: 25px;
}
td.big-risk {
    font-size: 31px;
    padding-left: 4px;
    padding-bottom: 1px;
}
.neg {
    color: #c00000;
}
.acct {
    display: flex;
    justify-content: space-between;
    padding-right: 5px;
}
.acct span:first-child {
    margin-left: 6px;
}
.yel td:nth-child(n+4) {
    background: #ffff33;
    border-color: #ffff33;
}
.org td:nth-child(n+4) {
    background: #fbba27;
    border-color: #fbba27;
}
.yel td.flagged {
    background: #fbba27;
    border-color: #fbba27;
}
.yel td.white {
    background: #fff;
}
td.total {
    border-top: 2px solid #222;
    border-bottom: 5px double #000;
    padding-right: 11px;
}
.note::before {
    content: "";
    position: absolute;
    left: 0;
    top: 0;
    width: 9px;
    height: 10px;
    background: #1f7a12;
    clip-path: polygon(0 0, 100% 0, 0 100%);
}
.org td.active-cell {
    box-shadow: inset 0 0 0 1px #217346, inset 0 0 0 2px #fff;
}
.cursor {
    position: absolute;
    left: 947px;
    top: 128px;
}
.drop-tag {
    position: absolute;
    left: 2031px;
    top: 1080px;
}
```
